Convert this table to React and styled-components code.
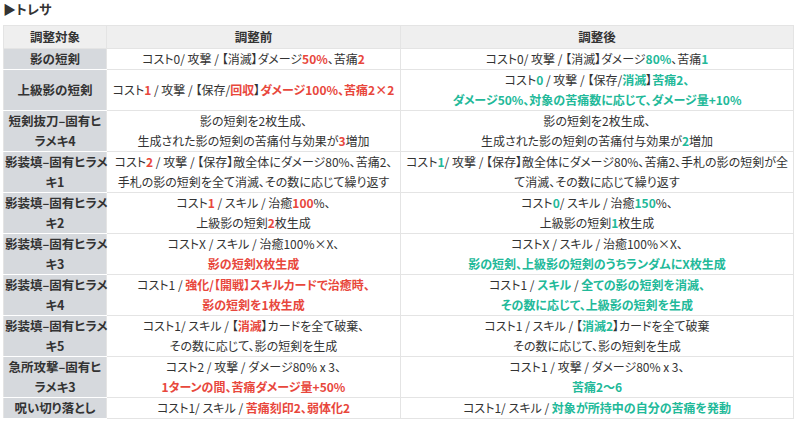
import React from 'react';
import styled, { createGlobalStyle } from 'styled-components';

const GlobalStyle = createGlobalStyle`
  html, body {
    margin: 0;
    padding: 0;
    background: #ffffff;
  }
  body {
    font-family: "Noto Sans CJK JP", "Noto Sans", sans-serif;
    color: #333333;
  }
`;

const Page = styled.div`
  width: 800px;
  height: 422px;
  padding: 0 3px;
  box-sizing: border-box;
  overflow: hidden;
`;

const Title = styled.h3`
  margin: 0;
  height: 25px;
  font-size: 13px;
  line-height: 18px;
  font-weight: 700;
  color: #333333;
  font-feature-settings: "palt";
`;

const Table = styled.table`
  width: 790px;
  border-collapse: collapse;
  table-layout: fixed;
  font-size: 12px;
  font-feature-settings: "palt";
`;

const HeadCell = styled.th`
  background: #efefef;
  border: 1px solid #e4e4e4;
  padding: 1px 0;
  line-height: 20px;
  font-size: 12.5px;
  font-weight: 700;
  text-align: center;
`;

const NameCell = styled.th`
  background: #d6d9dd;
  border: 1px solid #e4e4e4;
  border-bottom-color: #ffffff;
  padding: 0 1px;
  line-height: 20px;
  font-size: 12.5px;
  font-weight: 700;
  text-align: center;
  white-space: nowrap;
`;

const Cell = styled.td`
  border: 1px solid #e4e4e4;
  padding: 0;
  line-height: 20px;
  text-align: center;
  white-space: nowrap;
  overflow: hidden;
`;

const R = styled.span`
  color: #e8473c;
  font-weight: 700;
`;

const G = styled.span`
  color: #22b999;
  font-weight: 700;
`;

const rows = [
  {
    name: <>影の短剣</>,
    before: <>コスト0/ 攻撃 / 【消滅】ダメージ<R>50%</R>、苦痛<R>2</R></>,
    after: <>コスト0/ 攻撃 / 【消滅】ダメージ<G>80%</G>、苦痛<G>1</G></>,
  },
  {
    name: <>上級影の短剣</>,
    before: <>コスト<R>1</R> / 攻撃 / 【保存/<R>回収</R>】<R>ダメージ100%、苦痛2×2</R></>,
    after: <>コスト<G>0</G> / 攻撃 / 【保存/<G>消滅</G>】<G>苦痛2、</G><br /><G>ダメージ50%、対象の苦痛数に応じて、ダメージ量+10%</G></>,
  },
  {
    name: <>短剣抜刀–固有ヒ<br />ラメキ4</>,
    before: <>影の短剣を2枚生成、<br />生成された影の短剣の苦痛付与効果が<R>3</R>増加</>,
    after: <>影の短剣を2枚生成、<br />生成された影の短剣の苦痛付与効果が<G>2</G>増加</>,
  },
  {
    name: <>影装填–固有ヒラメ<br />キ1</>,
    before: <>コスト<R>2</R> / 攻撃 / 【保存】敵全体にダメージ80%、苦痛2、<br />手札の影の短剣を全て消滅、その数に応じて繰り返す</>,
    after: <>コスト<G>1</G>/ 攻撃 / 【保存】敵全体にダメージ80%、苦痛2、手札の影の短剣が全<br />て消滅、その数に応じて繰り返す</>,
  },
  {
    name: <>影装填–固有ヒラメ<br />キ2</>,
    before: <>コスト<R>1</R> / スキル / 治癒<R>100</R>%、<br />上級影の短剣<R>2</R>枚生成</>,
    after: <>コスト<G>0</G>/ スキル / 治癒<G>150</G>%、<br />上級影の短剣<G>1</G>枚生成</>,
  },
  {
    name: <>影装填–固有ヒラメ<br />キ3</>,
    before: <>コストX / スキル / 治癒100%×X、<br /><R>影の短剣X枚生成</R></>,
    after: <>コストX / スキル / 治癒100%×X、<br /><G>影の短剣、上級影の短剣のうちランダムにX枚生成</G></>,
  },
  {
    name: <>影装填–固有ヒラメ<br />キ4</>,
    before: <>コスト1 / <R>強化/【開戦】スキルカードで治癒時、</R><br /><R>影の短剣を1枚生成</R></>,
    after: <>コスト1 / <G>スキル</G> / <G>全ての影の短剣を消滅、</G><br /><G>その数に応じて、上級影の短剣を生成</G></>,
  },
  {
    name: <>影装填–固有ヒラメ<br />キ5</>,
    before: <>コスト1/ スキル / 【<R>消滅</R>】カードを全て破棄、<br />その数に応じて、影の短剣を生成</>,
    after: <>コスト1 / スキル / 【<G>消滅2</G>】カードを全て破棄<br />その数に応じて、影の短剣を生成</>,
  },
  {
    name: <>急所攻撃–固有ヒ<br />ラメキ3</>,
    before: <>コスト2 / 攻撃 / ダメージ80% x 3、<br /><R>1ターンの間、苦痛ダメージ量+50%</R></>,
    after: <>コスト1 / 攻撃 / ダメージ80% x 3、<br /><G>苦痛2～6</G></>,
  },
  {
    name: <>呪い切り落とし</>,
    before: <>コスト1/ スキル / <R>苦痛刻印2、弱体化2</R></>,
    after: <>コスト1/ スキル / <G>対象が所持中の自分の苦痛を発動</G></>,
  },
];

export default function App() {
  return (
    <Page>
      <GlobalStyle />
      <Title>▶トレサ</Title>
      <Table>
        <colgroup>
          <col style={{ width: 103 }} />
          <col style={{ width: 294 }} />
          <col style={{ width: 393 }} />
        </colgroup>
        <thead>
          <tr>
            <HeadCell>調整対象</HeadCell>
            <HeadCell>調整前</HeadCell>
            <HeadCell>調整後</HeadCell>
          </tr>
        </thead>
        <tbody>
          {rows.map((row, i) => (
            <tr key={i}>
              <NameCell>{row.name}</NameCell>
              <Cell>{row.before}</Cell>
              <Cell>{row.after}</Cell>
            </tr>
          ))}
        </tbody>
      </Table>
    </Page>
  );
}
